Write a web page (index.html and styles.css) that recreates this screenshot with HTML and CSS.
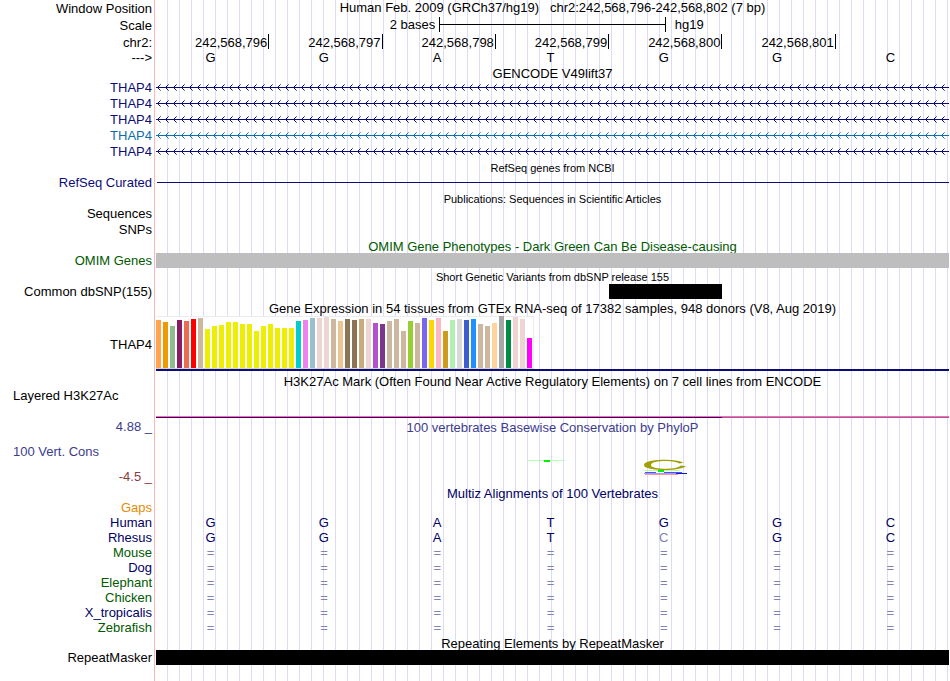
FILE: index.html
```html
<!DOCTYPE html>
<html lang="en">
<head>
<meta charset="utf-8">
<title>chr2:242,568,796-242,568,802 - Genome Browser</title>
<link rel="stylesheet" href="styles.css">
</head>
<body>
<main class="browser">
  <svg class="defs" width="0" height="0" aria-hidden="true">
    <defs>
      <pattern id="introns" width="8" height="16" patternUnits="userSpaceOnUse">
        <path d="M0 7h8v1H0zM2 6h1v1H2zM2 8h1v1H2zM3 5h1v1H3zM3 9h1v1H3z" fill="#0c0c78"/>
        <path d="M4 4h1v1H4zM4 10h1v1H4z" fill="#0c0c78" opacity=".6"/>
      </pattern>
      <pattern id="introns-alt" width="8" height="16" patternUnits="userSpaceOnUse">
        <path d="M0 7h8v1H0zM2 6h1v1H2zM2 8h1v1H2zM3 5h1v1H3zM3 9h1v1H3z" fill="#0c6eaa"/>
        <path d="M4 4h1v1H4zM4 10h1v1H4z" fill="#0c6eaa" opacity=".6"/>
      </pattern>
    </defs>
  </svg>

  <section class="ruler">
    <div class="row row-ruler"><span class="label">Window Position</span><h1 class="title">Human Feb. 2009 (GRCh37/hg19)&nbsp;&nbsp; chr2:242,568,796-242,568,802 (7 bp)</h1></div>
    <div class="row row-ruler"><span class="label">Scale</span>
      <div class="scale"><span class="scale-left">2 bases</span><span class="scale-bar"></span><span class="scale-right">hg19</span></div>
    </div>
    <div class="row row-ruler"><span class="label">chr2:</span>
      <div class="seven ticks"><span>242,568,796</span><span>242,568,797</span><span>242,568,798</span><span>242,568,799</span><span>242,568,800</span><span>242,568,801</span></div>
    </div>
    <div class="row row-bases"><span class="label">---&gt;</span>
      <div class="seven bases"><span>G</span><span>G</span><span>A</span><span>T</span><span>G</span><span>G</span><span>C</span></div>
    </div>
  </section>

  <section>
    <div class="row row-title"><h2 class="title">GENCODE V49lift37</h2></div>
    <div class="row row-gene"><a class="label navy" href="#">THAP4</a><svg class="gene"><rect width="100%" height="16" fill="url(#introns)"/></svg></div>
    <div class="row row-gene"><a class="label navy" href="#">THAP4</a><svg class="gene"><rect width="100%" height="16" fill="url(#introns)"/></svg></div>
    <div class="row row-gene"><a class="label navy" href="#">THAP4</a><svg class="gene"><rect width="100%" height="16" fill="url(#introns)"/></svg></div>
    <div class="row row-gene"><a class="label teal" href="#">THAP4</a><svg class="gene"><rect width="100%" height="16" fill="url(#introns-alt)"/></svg></div>
    <div class="row row-gene"><a class="label navy" href="#">THAP4</a><svg class="gene"><rect width="100%" height="16" fill="url(#introns)"/></svg></div>
  </section>

  <section>
    <div class="row row-title"><h2 class="title small">RefSeq genes from NCBI</h2></div>
    <div class="row row-item"><span class="label navy">RefSeq Curated</span><span class="thin-line"></span></div>
  </section>

  <section>
    <div class="row row-title-tall"><h2 class="title small">Publications: Sequences in Scientific Articles</h2></div>
    <div class="row row-gene"><span class="label">Sequences</span></div>
    <div class="row row-gene"><span class="label">SNPs</span></div>
  </section>

  <section>
    <div class="row row-title"><h2 class="title green">OMIM Gene Phenotypes - Dark Green Can Be Disease-causing</h2></div>
    <div class="row row-item"><span class="label green">OMIM Genes</span><span class="block gray"></span></div>
  </section>

  <section>
    <div class="row row-title-tall"><h2 class="title small">Short Genetic Variants from dbSNP release 155</h2></div>
    <div class="row row-item"><span class="label">Common dbSNP(155)</span><div class="seven"><span class="block black snp"></span></div></div>
  </section>

  <section>
    <div class="row row-ruler"><h2 class="title">Gene Expression in 54 tissues from GTEx RNA-seq of 17382 samples, 948 donors (V8, Aug 2019)</h2></div>
    <div class="row row-graph"><span class="label">THAP4</span><div class="expression"><div class="bars" id="bars"></div></div></div>
  </section>

  <section>
    <div class="row row-mark"><h2 class="title">H3K27Ac Mark (Often Found Near Active Regulatory Elements) on 7 cell lines from ENCODE</h2></div>
    <div class="row row-signal"><span class="label side">Layered H3K27Ac</span><div class="signal"><span class="signal-strong"></span><span class="signal-weak"></span></div></div>
  </section>

  <section class="row row-cons">
    <div class="cons-labels"><span class="label blue">4.88 _</span><span class="label side blue">100 Vert. Cons</span><span class="label red">-4.5 _</span></div>
    <div class="cons-body">
      <h2 class="title blue">100 vertebrates Basewise Conservation by PhyloP</h2>
      <svg class="cons" viewBox="0 0 793 50" preserveAspectRatio="none" aria-hidden="true">
        <path d="M372 25.5H409" stroke="#b4ffb4"/>
        <path d="M388 25h6v2h-6z" fill="#00f000"/>
        <path d="M527.500 27.800C523 25.500 517 24.800 510 24.800C497 24.800 488 26.500 488 30C488 33.500 497 35 510 35C518 35 526 33.900 530 31.300L525 30.500C522 32.700 517 33.800 510.500 33.800C501 33.800 495 32.500 495 30C495 27.200 501 26 510.500 26C516 26 521 27 523.500 28.600Z" fill="#a0a000"/>
        <path d="M488 35.500H524" stroke="#b4ffb4"/>
        <path d="M502 35h6v2h-6z" fill="#00f000"/>
        <path d="M489 37.500H500M508 37.500H526" stroke="#5050ff"/>
        <path d="M488 38.500H521" stroke="#9c9cff"/>
        <path d="M520 38.500H531" stroke="#1414d2"/>
        <path d="M489 39.500H522" stroke="#ff9696"/>
      </svg>
    </div>
  </section>

  <section>
    <div class="row row-multiz"><h2 class="title deep">Multiz Alignments of 100 Vertebrates</h2></div>
    <div class="row row-item"><span class="label orange">Gaps</span></div>
    <table class="alignment" aria-label="Multiz alignment">
      <tbody>
        <tr><th scope="row" class="deep">Human</th><td>G</td><td>G</td><td>A</td><td>T</td><td>G</td><td>G</td><td>C</td></tr>
        <tr><th scope="row" class="deep">Rhesus</th><td>G</td><td>G</td><td>A</td><td>T</td><td class="faded">C</td><td>G</td><td>C</td></tr>
        <tr class="unaligned"><th scope="row" class="green">Mouse</th><td>=</td><td>=</td><td>=</td><td>=</td><td>=</td><td>=</td><td>=</td></tr>
        <tr class="unaligned"><th scope="row" class="deep">Dog</th><td>=</td><td>=</td><td>=</td><td>=</td><td>=</td><td>=</td><td>=</td></tr>
        <tr class="unaligned"><th scope="row" class="green">Elephant</th><td>=</td><td>=</td><td>=</td><td>=</td><td>=</td><td>=</td><td>=</td></tr>
        <tr class="unaligned"><th scope="row" class="green">Chicken</th><td>=</td><td>=</td><td>=</td><td>=</td><td>=</td><td>=</td><td>=</td></tr>
        <tr class="unaligned"><th scope="row" class="deep">X_tropicalis</th><td>=</td><td>=</td><td>=</td><td>=</td><td>=</td><td>=</td><td>=</td></tr>
        <tr class="unaligned"><th scope="row" class="green">Zebrafish</th><td>=</td><td>=</td><td>=</td><td>=</td><td>=</td><td>=</td><td>=</td></tr>
      </tbody>
    </table>
  </section>

  <section>
    <div class="row row-title"><h2 class="title">Repeating Elements by RepeatMasker</h2></div>
    <div class="row row-item"><span class="label">RepeatMasker</span><span class="block black"></span></div>
  </section>
</main>
<script src="script.js"></script>
</body>
</html>
```
FILE: styles.css
```css
* {
  box-sizing: border-box;
}

body {
  margin: 0;
  background: #fff;
  color: #000;
  font-family: "Liberation Sans", Arial, sans-serif;
  font-size: 13px;
  line-height: 15px;
}

/* Pink divider over the white label column, then guide lines every 12px */
.browser {
  min-height: 100vh;
  padding-right: 1px;
  overflow: hidden;
  background-image:
    linear-gradient(#ffb4b4, #ffb4b4),
    linear-gradient(#fff, #fff),
    linear-gradient(to right, #dcdcf8 1px, transparent 1px);
  background-size: 1px 100%, 156px 100%, 12px 100%;
  background-position: 154px 0, 0 0, 11px 0;
  background-repeat: no-repeat, no-repeat, repeat;
}

.defs {
  display: block;
}

.row {
  display: grid;
  grid-template-columns: 152px minmax(0, 1fr);
  column-gap: 4px;
  align-items: center;
}

.row-ruler { height: 17px; }
.row-bases { height: 14px; line-height: 13px; }
.row-title, .row-item { height: 15px; }
.row-title-tall, .row-gene { height: 16px; }
.row-graph { height: 55px; }
.row-mark { height: 20px; }
.row-signal { height: 28px; }
.row-cons { height: 67px; }
.row-multiz { height: 14px; }

.row-gene, .row-bases { align-items: start; }

.label {
  text-align: right;
  white-space: nowrap;
  text-decoration: none;
  color: #000;
}

.label.side {
  padding-left: 13px;
  text-align: left;
}

.title {
  grid-column: 2;
  margin: 0;
  font-size: 13px;
  font-weight: normal;
  text-align: center;
  white-space: nowrap;
}

.title.small {
  font-size: 11px;
}

.row-title .title {
  padding-top: 1px;
}

.row-title-tall .title,
.row-ruler h2 {
  padding-top: 2px;
}

.row-ruler h1 {
  padding-bottom: 2px;
}

.navy, .label.navy { color: #0c0c78; }
.teal, .label.teal { color: #0c6eaa; }
.deep { color: #000064; }
.blue, .label.blue { color: #3c3c8c; }
.red, .label.red { color: #8c3c3c; }
.green, .label.green { color: #005a00; }
.orange, .label.orange { color: #e68c00; }

.seven {
  display: grid;
  grid-template-columns: repeat(7, minmax(0, 1fr));
}

/* Position ruler */
.scale {
  display: grid;
  grid-template-columns: 5fr 4fr 5fr;
  height: 17px;
}

.scale-left {
  padding-right: 4px;
  text-align: right;
}

.scale-bar {
  height: 15px;
  border: solid #000;
  border-width: 0 1px;
  background: linear-gradient(#000, #000) 0 7px / 100% 1px no-repeat;
}

.scale-right {
  padding-left: 9px;
}

.ticks {
  height: 17px;
}

.ticks span {
  height: 15px;
  padding-top: 1px;
  padding-right: 1px;
  border-right: 1px solid #000;
  text-align: right;
}

.bases span {
  padding-right: 4px;
  text-align: center;
}

/* Track items */
.gene {
  display: block;
  width: 100%;
  height: 16px;
}

.thin-line {
  height: 1px;
  margin-left: 1px;
  background: #0c0c78;
}

.block { height: 15px; }
.gray { background: #bebebe; }
.black { background: #000; }
.snp { grid-column: 5; }

.row-graph .label {
  padding-top: 2px;
}

.expression {
  height: 55px;
  border-bottom: 2px solid #0c0c78;
}

.bars {
  display: inline-flex;
  align-items: flex-end;
  gap: 2px;
  height: 53px;
  padding-right: 1px;
  border: solid #ececec;
  border-width: 1px 1px 1px 0;
  border-bottom-color: #d2d2d2;
  background: #fff;
  vertical-align: top;
}

.bars i {
  width: 5px;
}

.row-signal {
  align-items: start;
}

.row-signal .label {
  margin-top: -3px;
}

.signal {
  display: grid;
  grid-template-columns: 5fr 2fr;
  align-items: end;
  height: 27px;
}

.signal-strong, .signal-weak {
  height: 2px;
  border-top: 1px solid #ff64c8;
  background: #3c0a50;
}

.signal-weak {
  background: #a06482;
}

.cons-labels {
  display: flex;
  flex-direction: column;
  justify-content: space-between;
  height: 67px;
  padding-bottom: 2px;
}

.cons-body {
  height: 67px;
  padding-top: 1px;
}

.cons {
  display: block;
  width: 100%;
  height: 50px;
}

/* Species alignment */
.alignment {
  width: 100%;
  table-layout: fixed;
  border-collapse: collapse;
}

.alignment th, .alignment td {
  height: 15px;
  padding: 0 4px 0 0;
  font-weight: normal;
  text-align: center;
}

.alignment th {
  width: 156px;
  text-align: right;
}

.alignment td { color: #000064; }
.alignment td.faded,
.alignment .unaligned td { color: #8282b4; }
```
FILE: script.js
```js
// Median expression per tissue: bar height in pixels and GTEx tissue color.
const tissues = [
  [48, 'FFA54F'], [46, 'EE9A00'], [42, '8FBC8F'], [48, '8B1C62'], [47, 'EE6A50'], [49, 'FF0000'],
  [50, 'CDB79E'], [39, 'EEEE00'], [42, 'EEEE00'], [43, 'EEEE00'], [46, 'EEEE00'], [46, 'EEEE00'],
  [44, 'EEEE00'], [44, 'EEEE00'], [37, 'EEEE00'], [42, 'EEEE00'], [44, 'EEEE00'], [40, 'EEEE00'],
  [40, 'EEEE00'], [40, 'EEEE00'], [47, '00CDCD'], [48, 'EE82EE'], [50, '9AC0CD'], [50, 'EED5D2'],
  [51, 'EED5D2'], [49, 'CDB79E'], [47, 'EEC591'], [49, '8B7355'], [48, '8B7355'], [49, 'CDAA7D'],
  [49, 'EED5D2'], [45, 'B452CD'], [44, '7A378B'], [47, 'CDB79E'], [49, 'CDB79E'], [37, 'CDB79E'],
  [47, '9ACD32'], [45, 'CDB79E'], [50, '7A67EE'], [48, 'FFD700'], [50, 'FFB6C1'], [37, 'CD9B1D'],
  [48, 'B4EEB4'], [49, 'D9D9D9'], [48, '3A5FCD'], [49, '1E90FF'], [44, 'CDB79E'], [42, 'CDB79E'],
  [45, 'FFD39B'], [52, 'A6A6A6'], [48, '008B45'], [51, 'EED5D2'], [49, 'EED5D2'], [30, 'FF00FF']
];

const bars = document.getElementById('bars');
for (const [height, color] of tissues) {
  const bar = document.createElement('i');
  bar.style.height = height + 'px';
  bar.style.background = '#' + color;
  bars.append(bar);
}
```
